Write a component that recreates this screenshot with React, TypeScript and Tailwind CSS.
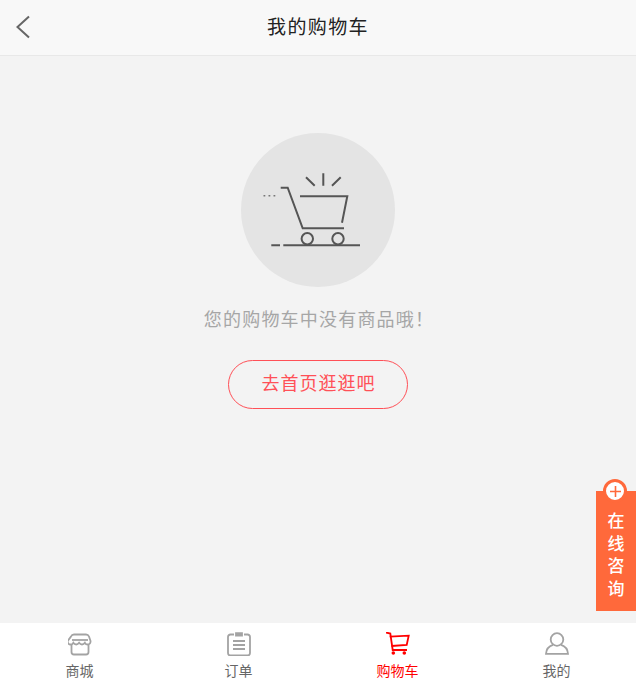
const fontCJK = "font-['Liberation_Sans','Noto_Sans_CJK_SC',sans-serif]";

function EmptyCart() {
  return (
    <svg width="154" height="154" viewBox="0 0 154 154" fill="none" stroke="#555" strokeWidth="2">
      <path d="M39.7 54.700h7l15 40.600H103" />
      <path d="M59 63.300h47.300l-5.300 26.400" />
      <path d="M65 44.300l8.700 8.400M82.300 40.300v12.400M91 52.700l8.700-8.400" />
      <circle cx="66.300" cy="105.700" r="5.700" />
      <circle cx="97" cy="105.700" r="5.700" />
      <path d="M42.300 112.300H119M30.300 112.300H39" />
      <path d="M22.500 62.700h1.800M27.500 62.700h1.800M32.500 62.700h1.800" stroke="#777" strokeWidth="1.500" />
    </svg>
  );
}

function StoreIcon() {
  return (
    <svg width="24" height="24" viewBox="0 0 24 24" fill="none" stroke="#a3a3a3" strokeWidth="1.800">
      <path d="M6 2.500h12c1.500 0 2.500.8 3 2l1.500 4.500c.3 2-1 3.500-2.700 3.500-1.400 0-2.400-.7-2.900-1.700-.7 1-1.800 1.700-2.900 1.700s-2.200-.7-2.900-1.700c-.7 1-1.800 1.700-2.900 1.700s-2.200-.7-2.900-1.700c-.5 1-1.500 1.700-2.900 1.700-1.700 0-3-1.500-2.700-3.500L3 4.500c.5-1.200 1.500-2 3-2z" />
      <path d="M4 8h16" />
      <path d="M3.500 13v7c0 1.500 1 2.500 2.500 2.500h12c1.500 0 2.500-1 2.500-2.500v-7" />
    </svg>
  );
}

function OrderIcon() {
  return (
    <svg width="24" height="24" viewBox="0 0 24 24" fill="none" stroke="#a3a3a3" strokeWidth="1.800">
      <path d="M7 2.500H3.500C2 2.500 1 3.500 1 5v16c0 1.500 1 2.500 2.500 2.500h17c1.500 0 2.500-1 2.500-2.500V5c0-1.500-1-2.500-2.500-2.500H17" />
      <path d="M9 1.200h6v2.300H9z" fill="#a3a3a3" />
      <path d="M6 9h12M6 13h12M6 17h12" />
    </svg>
  );
}

function CartIcon() {
  return (
    <svg width="24" height="24" viewBox="0 0 24 24" fill="none" stroke="#f00" strokeWidth="1.800">
      <path d="M0 .5l4.300 1L6.700 18H21" />
      <path d="M3.700 4.700l19-1-2 9.300-15.200 1" />
      <circle cx="7.300" cy="21" r="1.800" fill="#f00" stroke="none" />
      <circle cx="18.300" cy="21" r="1.800" fill="#f00" stroke="none" />
    </svg>
  );
}

function UserIcon() {
  return (
    <svg width="24" height="24" viewBox="0 0 24 24" fill="none" stroke="#a3a3a3" strokeWidth="1.800">
      <circle cx="12" cy="7.500" r="6.300" />
      <path d="M8 12.800C4 14 1.300 17 1 21.800h22c-.3-4.800-3-7.800-7-9" />
    </svg>
  );
}

const tabs = [
  { label: "商城", icon: <StoreIcon /> },
  { label: "订单", icon: <OrderIcon /> },
  { label: "购物车", icon: <CartIcon />, active: true },
  { label: "我的", icon: <UserIcon /> },
];

export default function App() {
  return (
    <div className={`relative flex h-[687px] w-[636px] flex-col overflow-hidden bg-[#f3f3f3] ${fontCJK}`}>
      <header className="relative flex h-14 shrink-0 items-center justify-center border-b border-[#e8e8e8] bg-[#f8f8f8]">
        <svg className="absolute left-[15px] top-[15px]" width="16" height="24" viewBox="0 0 16 24" fill="none" stroke="#666" strokeWidth="2">
          <path d="M14 1.500L2.500 12 14 22.500" />
        </svg>
        <h1 className="text-[19px] leading-none tracking-[1.400px] text-[#222]">我的购物车</h1>
      </header>

      <main className="flex flex-1 flex-col items-center pt-[77px]">
        <div className="flex h-[154px] w-[154px] items-center justify-center rounded-full bg-[#e4e4e4]">
          <EmptyCart />
        </div>
        <p className="mt-[20px] pl-[2px] text-[18px] leading-[26px] tracking-[1.200px] text-[#a6a6a6]">您的购物车中没有商品哦！</p>
        <button className="mt-[27px] flex h-[49px] w-[180px] items-center justify-center rounded-full border border-[#ff5057] pl-[1px] text-[18px] tracking-[1px] text-[#ff5057]">
          去首页逛逛吧
        </button>
      </main>

      <nav className="grid h-16 shrink-0 grid-cols-4 bg-white">
        {tabs.map((tab) => (
          <div key={tab.label} className="flex flex-col items-center pt-[9px]">
            {tab.icon}
            <span className={`mt-[5px] text-sm leading-5 ${tab.active ? "text-[#f00]" : "text-[#666]"}`}>{tab.label}</span>
          </div>
        ))}
      </nav>

      <div className="absolute right-0 top-[491px] flex h-[120px] w-10 flex-col items-center bg-[#ff693b] pt-[20px] text-[17px] font-medium leading-[22.500px] text-white">
        <span className="absolute -top-[12px] left-[7px] flex h-6 w-6 items-center justify-center rounded-full border-[3px] border-[#ff693b] bg-white">
          <svg width="11" height="11" viewBox="0 0 11 11" stroke="#ff693b" strokeWidth="1.600">
            <path d="M5.500 0v11M0 5.500h11" />
          </svg>
        </span>
        <span>在</span>
        <span>线</span>
        <span>咨</span>
        <span>询</span>
      </div>
    </div>
  );
}
